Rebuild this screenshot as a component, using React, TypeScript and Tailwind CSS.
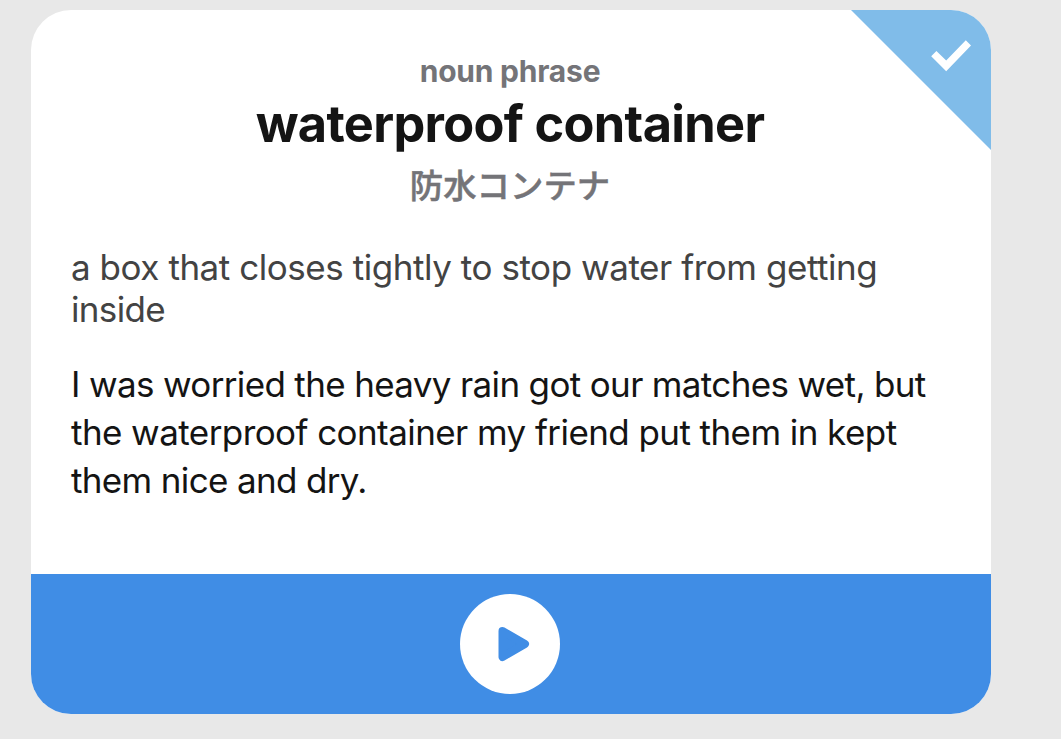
export default function App() {
  return (
    <main className="flex h-[739px] w-[1061px] items-start overflow-hidden bg-[#e8e8e8] pt-[10px] pl-[31px] font-['Inter','Noto_Sans_CJK_JP',sans-serif]">
      <article className="relative flex h-[704px] w-[960px] flex-col overflow-hidden rounded-[40px] bg-white">
        <svg className="absolute top-0 right-0 h-[140px] w-[140px]" viewBox="0 0 140 140" aria-hidden="true">
          <path d="M0 0H140V140Z" fill="#80bce9" />
          <path d="M80.2 46.2L85.4 41L95.2 50.6L114.8 30.2L120 35.4L95.2 61.2Z" fill="white" />
        </svg>
        <header className="flex flex-col items-center pt-[40px] pr-[2px] text-center">
          <p className="h-[42px] text-[30px] leading-[42px] font-bold tracking-[-0.22px] whitespace-nowrap text-[#747478]">noun phrase</p>
          <h1 className="h-[64px] text-[50.5px] leading-[64px] font-bold tracking-[-0.68px] whitespace-nowrap text-[#141414]">waterproof container</h1>
          <p className="h-[56px] text-[33.4px] leading-[60px] font-medium whitespace-nowrap text-[#747478] [-webkit-text-stroke:0.5px_#747478]">防水コンテナ</p>
        </header>
        <section className="flex grow flex-col px-[40px] pt-[34px]">
          <p className="text-[35px] leading-[42px] text-[#434343]">
            <span className="block w-fit tracking-[-0.45px] whitespace-nowrap">a box that closes tightly to stop water from getting</span>
            <span className="block w-fit tracking-[-0.65px] whitespace-nowrap">inside</span>
          </p>
          <p className="mt-[30px] text-[35px] leading-[48px] text-[#141414]">
            <span className="block w-fit tracking-[-0.65px] whitespace-nowrap">I was worried the heavy rain got our matches wet, but</span>
            <span className="block w-fit tracking-[-0.57px] whitespace-nowrap">the waterproof container my friend put them in kept</span>
            <span className="block w-fit tracking-[-0.65px] whitespace-nowrap">them nice and dry.</span>
          </p>
        </section>
        <footer className="flex h-[140px] shrink-0 items-center justify-center bg-[#408de5] pr-[2px]">
          <button aria-label="Play" className="flex h-[100px] w-[100px] items-center justify-center rounded-full bg-white">
            <svg className="h-[100px] w-[100px]" viewBox="0 0 100 100" aria-hidden="true">
              <path d="M42.5 37L65 50L42.5 63Z" fill="#408de5" stroke="#408de5" strokeWidth="8" strokeLinejoin="round" />
            </svg>
          </button>
        </footer>
      </article>
    </main>
  );
}
